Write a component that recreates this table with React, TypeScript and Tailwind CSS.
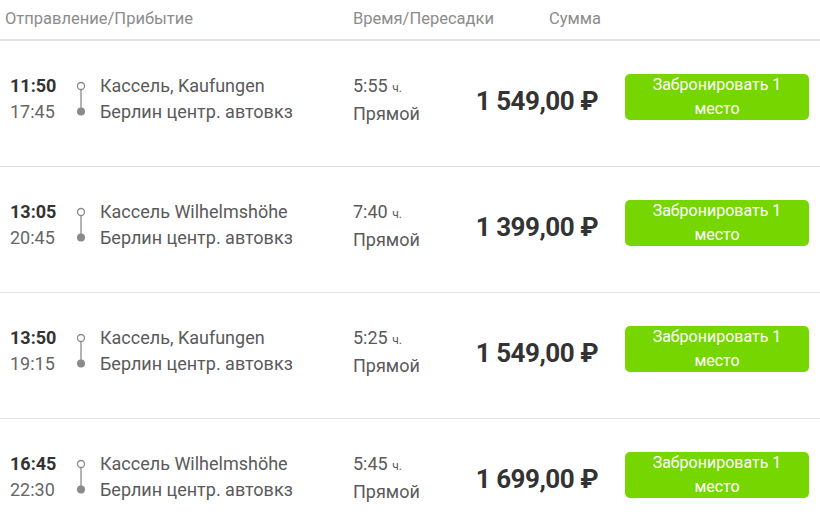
import React from "react";

const rows = [
  { dep: "11:50", arr: "17:45", from: "Кассель, Kaufungen", to: "Берлин центр. автовкз", dur: "5:55", price: "1 549,00 ₽" },
  { dep: "13:05", arr: "20:45", from: "Кассель Wilhelmshöhe", to: "Берлин центр. автовкз", dur: "7:40", price: "1 399,00 ₽" },
  { dep: "13:50", arr: "19:15", from: "Кассель, Kaufungen", to: "Берлин центр. автовкз", dur: "5:25", price: "1 549,00 ₽" },
  { dep: "16:45", arr: "22:30", from: "Кассель Wilhelmshöhe", to: "Берлин центр. автовкз", dur: "5:45", price: "1 699,00 ₽" },
];

function RouteIcon() {
  return (
    <svg width="12" height="36" viewBox="0 0 12 36" className="mt-[7px]">
      <circle cx="6" cy="6" r="3.5" fill="white" stroke="#8a8a8a" strokeWidth="1.3" />
      <line x1="6" y1="9.5" x2="6" y2="30" stroke="#8a8a8a" strokeWidth="1.3" />
      <circle cx="6" cy="31.5" r="4" fill="#8a8a8a" />
    </svg>
  );
}

export default function App() {
  return (
    <div className="w-[820px] h-[516px] overflow-hidden bg-white" style={{ fontFamily: "Roboto, 'Liberation Sans', sans-serif" }}>
      <div className="flex h-[41px] items-center border-b-2 border-[#e3e3e3] text-[16.5px] text-[#8c8c8c]">
        <div className="w-[353px] pl-[5px]">Отправление/Прибытие</div>
        <div className="w-[196px]">Время/Пересадки</div>
        <div>Сумма</div>
      </div>
      {rows.map((r, i) => (
        <div key={i} className="flex h-[126px] items-start border-b border-[#e3e3e3] pt-[32px]">
          <div className="w-[70px] pl-[10px] text-[18px] leading-[26px]">
            <div className="font-bold text-[#333]">{r.dep}</div>
            <div className="text-[#666]">{r.arr}</div>
          </div>
          <div className="w-[30px] flex justify-center pr-[10px] pl-[1px]">
            <RouteIcon />
          </div>
          <div className="w-[253px] text-[18px] leading-[26px] text-[#5a5a5a]">
            <div>{r.from}</div>
            <div>{r.to}</div>
          </div>
          <div className="w-[100px] text-[18px] leading-[26px] text-[#5a5a5a]">
            <div>
              {r.dur} <span className="text-[12px]">ч.</span>
            </div>
            <div>Прямой</div>
          </div>
          <div className="w-[145px] flex justify-end pt-[13px] text-[26px] leading-[30px] font-bold text-[#333] tracking-[-0.5px]">
            {r.price}
          </div>
          <div className="ml-[27px] mt-[1px] flex h-[46px] w-[184px] flex-col items-center justify-center rounded-[5px] bg-[#76d600] text-[16px] leading-[24px] text-white">
            <div>Забронировать 1</div>
            <div>место</div>
          </div>
        </div>
      ))}
    </div>
  );
}
